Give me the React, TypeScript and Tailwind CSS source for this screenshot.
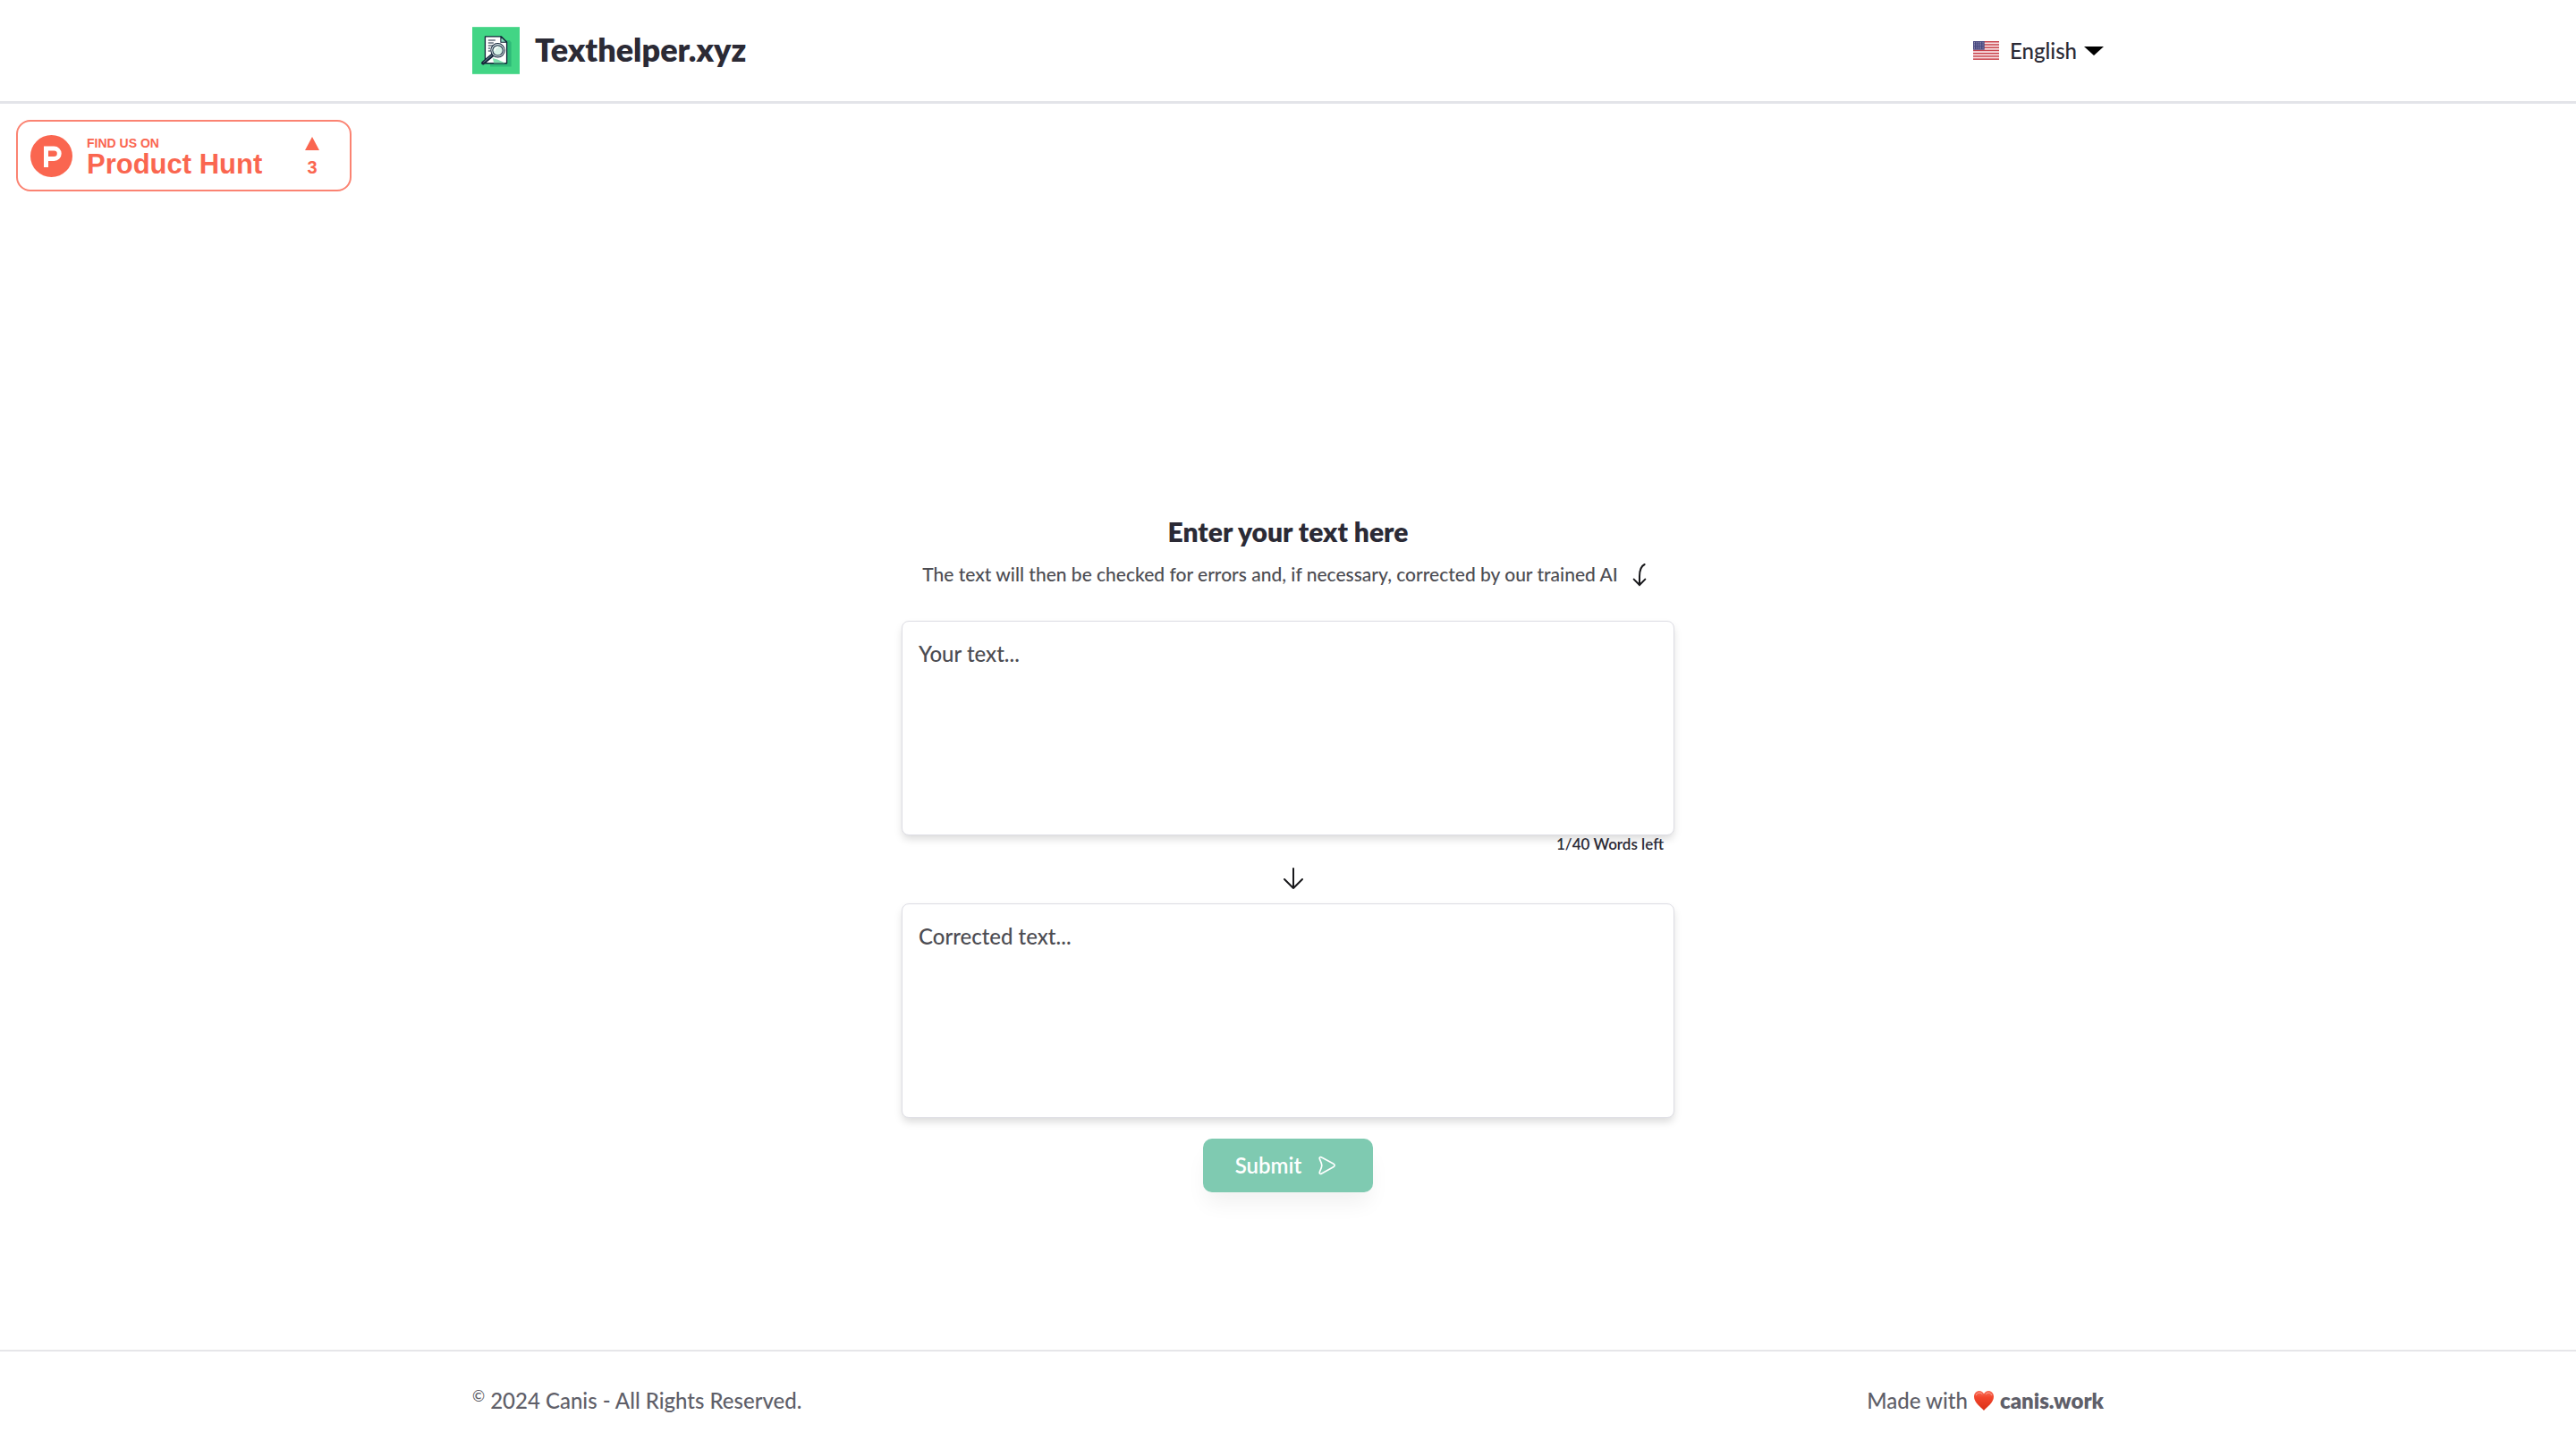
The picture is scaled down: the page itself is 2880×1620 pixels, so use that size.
import { useState } from 'react';

const MAX_WORDS = 40;

function Logo() {
  return (
    <svg viewBox="0 0 158 157" className="w-[53px] h-[53px]" aria-hidden="true">
      <rect width="158" height="157" fill="#42d585" />
      {/* page with its drop shadow */}
      <path d="M54 44h70l6 8v80H60z" fill="#2fb978" />
      <path d="M43 32h54l18 18v71H43z" fill="#fff" stroke="#14263a" strokeWidth="4" strokeLinejoin="round" />
      <path d="M95 32v19h20z" fill="#8fd9bf" stroke="#14263a" strokeWidth="3" strokeLinejoin="round" />
      <path d="M53 44h24M53 53h18M53 62h22M53 71h8M53 80h8" stroke="#14263a" strokeWidth="3" />
      <path d="M68 104l16 4 26 12H72z" fill="#7edfae" />
      {/* magnifier */}
      <path d="M68 93L36 120" stroke="#14263a" strokeWidth="12" strokeLinecap="round" />
      <path d="M66 94L38 117" stroke="#9fb4be" strokeWidth="2" strokeLinecap="round" />
      <circle cx="85" cy="78" r="20" fill="#d5f0e6" stroke="#14263a" strokeWidth="9" />
      <circle cx="85" cy="78" r="20" fill="none" stroke="#e3eef0" strokeWidth="3" />
      <path d="M75 78a11 11 0 0 1 10-11" fill="none" stroke="#fff" strokeWidth="4" strokeLinecap="round" />
    </svg>
  );
}

const STRIPES = [0, 1, 2, 3, 4, 5, 6];
const STARS = [0, 1, 2, 3, 4];

function UsFlag() {
  return (
    <svg viewBox="0 0 87 63" className="w-[29px] h-[21px]" aria-hidden="true">
      <rect width="87" height="63" fill="#f8e3e6" />
      {STRIPES.map((i) => (
        <rect key={i} y={i * 9.7} width="87" height="4.4" fill="#c8414a" />
      ))}
      <rect width="38" height="29" fill="#46467f" />
      {STARS.map((row) =>
        STARS.map((col) => <circle key={`${row}-${col}`} cx={5 + col * 7} cy={4 + row * 5} r="1.3" fill="#fff" />),
      )}
    </svg>
  );
}

function ProductHuntMark() {
  return (
    <svg viewBox="0 0 47 47" className="w-[47px] h-[47px] shrink-0" aria-hidden="true">
      <circle cx="23.5" cy="23.5" r="23.5" fill="#fa6650" />
      <path
        d="M15 12.5h11.5a8.2 8.2 0 0 1 0 16.4H20V36h-5zM20 17.4v6.6h6.5a3.3 3.3 0 0 0 0-6.6z"
        fill="#fff"
        fillRule="evenodd"
      />
    </svg>
  );
}

function Heart() {
  return (
    <svg viewBox="0 0 22 22" className="w-[22px] h-[22px]" role="img" aria-label="love">
      <defs>
        <linearGradient id="heart" x1="0" y1="0" x2="0" y2="1">
          <stop offset="0" stopColor="#f8705a" />
          <stop offset="0.35" stopColor="#f2452c" />
          <stop offset="1" stopColor="#d92f16" />
        </linearGradient>
      </defs>
      <path
        d="M11 22C8 18 0 13.500 0 6.500 0 2.500 2.700 0 6 0c2.200 0 4 1.300 5 3.200C12 1.300 13.800 0 16 0c3.300 0 6 2.500 6 6.500C22 13.500 14 18 11 22z"
        fill="url(#heart)"
      />
      <path d="M2.500 4.500C4 1.500 7 1.500 9 3.500M13.500 3.500C15.500 1.500 18 1.500 19.500 4.500" fill="none" stroke="#fca595" strokeWidth="1" strokeLinecap="round" />
    </svg>
  );
}

function Header() {
  return (
    <header className="border-b-[3px] border-[#e3e4e9]">
      <div className="mx-auto flex max-w-[1824px] items-center justify-between py-[30px]">
        <a href="#" className="flex items-center gap-[17px]">
          <Logo />
          <span className="pb-1 text-[36px] leading-[44px] font-extrabold">Texthelper.xyz</span>
        </a>
        <button type="button" className="flex items-center gap-2 text-[24px] leading-8 font-medium">
          <span className="flex items-center gap-3">
            <UsFlag />
            English
          </span>
          <svg viewBox="0 0 22 10" className="w-[22px] h-[10px]" aria-hidden="true">
            <path d="M0 0h22L11 10z" fill="#000" />
          </svg>
        </button>
      </div>
    </header>
  );
}

function ProductHuntBadge() {
  return (
    <a
      href="#"
      className="flex h-20 w-[375px] items-center rounded-2xl border-2 border-[#fb8372] pl-[14px] pr-[34px] font-['Liberation_Sans',sans-serif] font-bold text-[#fa6650]"
    >
      <ProductHuntMark />
      <span className="ml-4 flex flex-1 flex-col pt-[3px]">
        <span className="text-[14px] leading-4">FIND US ON</span>
        <span className="text-[31px] leading-8">Product Hunt</span>
      </span>
      <span className="flex flex-col items-center gap-2 pt-[2px]">
        <svg viewBox="0 0 16 15" className="w-4 h-[15px]" aria-hidden="true">
          <path d="M8 0l8 15H0z" fill="currentColor" />
        </svg>
        <span className="text-[20px] leading-[22px]">3</span>
      </span>
    </a>
  );
}

const boxClass =
  'block h-60 w-full resize-none rounded-lg border border-[#dcdce3] bg-white px-[18px] py-5 text-[24px] leading-8 font-medium shadow-[0_5px_10px_-1px_rgba(0,0,0,0.15)] outline-none placeholder:text-[#4c4c52]';

function TextForm() {
  const [text, setText] = useState('');
  const words = Math.max(1, text.split(/\s+/).filter(Boolean).length);

  return (
    <form
      className="mx-auto flex w-full max-w-[864px] flex-col items-center"
      onSubmit={(e) => e.preventDefault()}
    >
      <h1 className="text-[30px] leading-9 font-extrabold">
        <label htmlFor="source">Enter your text here</label>
      </h1>
      <div className="mt-[14px] flex items-center gap-2 text-[21px] leading-[26px] font-medium text-[#4c4c52]">
        <p>The text will then be checked for errors and, if necessary, corrected by our trained AI</p>
        <svg viewBox="0 0 96 96" className="w-8 h-8 shrink-0" fill="none" stroke="#18181b" strokeWidth="6" strokeLinecap="round" aria-hidden="true">
          <path d="M65 15C53 21 48 36 48 55v27M29 65l19 19 19-19" />
        </svg>
      </div>

      <textarea
        id="source"
        className={`mt-9 ${boxClass}`}
        placeholder="Your text..."
        value={text}
        onChange={(e) => setText(e.target.value)}
      />
      <p className="self-end pr-3 text-[17px] leading-5 font-semibold">
        {words}/{MAX_WORDS} Words left
      </p>

      <svg viewBox="0 0 32 32" className="my-3 ml-3 w-8 h-8" fill="none" stroke="#18181b" strokeWidth="2" strokeLinecap="round" strokeLinejoin="round" aria-hidden="true">
        <path d="M16 5v22M6 17l10 10 10-10" />
      </svg>

      <textarea className={boxClass} placeholder="Corrected text..." aria-label="Corrected text" readOnly />

      <button
        type="submit"
        className="mt-[23px] flex h-[60px] items-center gap-4 rounded-[10px] bg-[#7fcab1] px-9 text-[24px] leading-8 font-semibold text-white shadow-[0_16px_24px_-4px_rgba(0,0,0,0.06)]"
      >
        Submit
        <svg viewBox="0 0 84 84" className="w-7 h-7" fill="none" stroke="#fff" strokeWidth="5" strokeLinejoin="round" aria-hidden="true">
          <path d="M20 15L59 36c6 3 6 8 0 11L20 69c-5 3-9 0-7-5l6-15c2-5 2-9 0-14L13 20c-2-4 2-8 7-5z" />
        </svg>
      </button>
    </form>
  );
}

function Footer() {
  return (
    <footer className="border-t-2 border-[#e6e6e9] text-[24px] leading-7 font-medium text-[#5f5f69]">
      <div className="mx-auto flex max-w-[1824px] items-center justify-between py-10">
        <p>
          <span className="align-text-top text-[17px] leading-5">©</span> 2024 Canis - All Rights Reserved.
        </p>
        <p className="flex items-center gap-[7px]">
          Made with
          <Heart />
          <a href="#" className="font-extrabold">
            canis.work
          </a>
        </p>
      </div>
    </footer>
  );
}

export default function App() {
  return (
    <div className="flex min-h-screen flex-col bg-white font-['Lato',sans-serif] text-[#2b2a35]">
      <Header />
      <main className="flex flex-1 flex-col">
        <div className="px-[18px] pt-[18px]">
          <ProductHuntBadge />
        </div>
        <div className="pt-[362px] pb-20">
          <TextForm />
        </div>
      </main>
      <Footer />
    </div>
  );
}
